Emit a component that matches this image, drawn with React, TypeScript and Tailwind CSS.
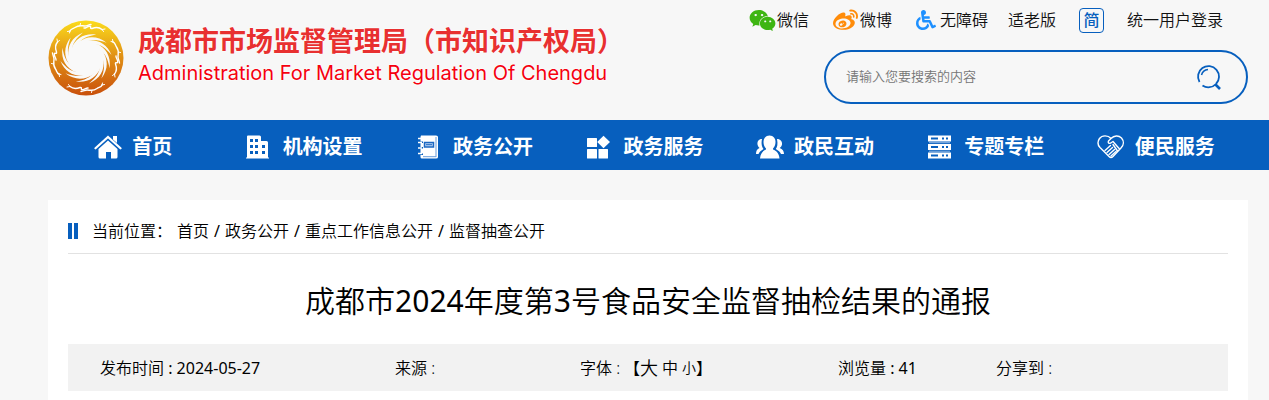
import type { ReactNode } from 'react';
import { FaWeibo, FaWeixin, FaWheelchair } from 'react-icons/fa';

const blades = Array.from({ length: 12 }, (_, i) => i * 30);
const quarters = [0, 90, 180, 270];

function SunBird() {
  return (
    <svg viewBox="0 0 76 76" className="h-[76px] w-[76px] shrink-0" aria-hidden="true">
      <defs>
        <linearGradient id="sun" x1="0" y1="0" x2="0" y2="1">
          <stop offset="0" stopColor="#fbdc1c" />
          <stop offset="0.45" stopColor="#e29416" />
          <stop offset="1" stopColor="#c9500c" />
        </linearGradient>
      </defs>
      <circle cx="38" cy="38" r="37.5" fill="url(#sun)" />
      <circle cx="38" cy="38" r="17.5" fill="#f9f9f9" />
      {blades.map((a) => (
        <path
          key={a}
          d="M20.500 37C19 26 24 17 35 12.500C28 18.500 24.500 23 24 30Z"
          fill="#f9f9f9"
          transform={`rotate(${a} 38 38)`}
        />
      ))}
      {quarters.map((a) => (
        <g key={a} transform={`rotate(${a} 38 38)`} fill="none" stroke="#fff" strokeLinecap="round">
          <path d="M22 11C23 8.500 25 9 27 7.500C31 4.500 34 6 37 6C39 6 40 5 43 4.500" strokeWidth="1.400" />
          <path d="M36 8C38 8.500 39 6 42 6.300C44 6.800 41 9 44 8.500C48 7 51 7 54 9.500" strokeWidth="1.400" />
          <path d="M22 11L19.500 11.500M22 11L21.500 13M54 9.500L57 9M54 9.500L55.500 11.500M32 5.500L32.500 3.500" strokeWidth="1" />
        </g>
      ))}
    </svg>
  );
}

function Icon({ children }: { children: ReactNode }) {
  return (
    <svg viewBox="0 0 28 24" className="h-6 w-7 shrink-0" fill="currentColor" aria-hidden="true">
      {children}
    </svg>
  );
}

const navItems = [
  {
    name: '首页',
    icon: (
      <Icon>
        <path d="M1.500 13.300L14 2L26.500 13.300" fill="none" stroke="currentColor" strokeWidth="2.200" strokeLinecap="round" />
        <path d="M19 1H23V8L19 4.500Z" />
        <path d="M14 5.500L23.500 14V22Q23.500 23.500 22 23.500H17V17H12V23.500H6Q4.500 23.500 4.500 22V14Z" />
      </Icon>
    ),
  },
  {
    name: '机构设置',
    icon: (
      <Icon>
        <path
          fillRule="evenodd"
          d="M3 0.500H14.500Q16 0.500 16 2V6H21.500Q23 6 23 7.500V22.500H24V23.500H1V22.500H2V1.500Q2 0.500 3 0.500ZM5 4V7H8V4ZM10 4V7H13V4ZM5 10V13H8V10ZM10 10V13H13V10ZM5 16V19H8V16ZM10 16V19H13V16ZM17 10V13H20V10ZM17 16V19H20V16Z"
        />
      </Icon>
    ),
  },
  {
    name: '政务公开',
    icon: (
      <Icon>
        <path
          fillRule="evenodd"
          d="M6 0.500H21Q23 0.500 23 2V22Q23 23.500 21 23.500H7Q5.500 23.500 5.500 22V20H8V18.500H5.500V13.500H8V12H5.500V8H8V6.500H5.500V2Z"
        />
        <path d="M3 3.500H6M3 7.500H7M3 13H7M3 18.500H7" stroke="currentColor" strokeWidth="1.500" />
        <path d="M21 2V22M8 21.700H21" stroke="#6b9dda" />
        <path d="M9.500 7.500H18.500V12H9.500Z" fill="#b8d0ee" stroke="#1c68c2" strokeWidth="1.500" />
        <path d="M11 9.700H17" stroke="#1c68c2" />
      </Icon>
    ),
  },
  {
    name: '政务服务',
    icon: (
      <Icon>
        <rect x="2" y="3" width="10" height="9" rx="0.500" />
        <rect x="2" y="14" width="10" height="9.500" rx="0.500" />
        <rect x="13.500" y="14" width="9.500" height="9.500" rx="0.500" />
        <path d="M18.500 0.700L25 7L18.500 13.300L12.200 7Z" />
      </Icon>
    ),
  },
  {
    name: '政民互动',
    icon: (
      <Icon>
        <path d="M13.500 0.500C17.500 0.500 19.500 3.500 19.500 7C19.500 10 18.500 12 17 13.500V14.500C20.500 16 23 18 23.500 23.500H4C4.500 18 7 16 10 14.500V13.500C8.500 12 7.500 10 7.500 7C7.500 3.500 9.500 0.500 13.500 0.500Z" />
        <path d="M6 4C2.500 4 1 6.500 1.500 9.500C1.800 11 2.500 12 3.500 13C1 14 0 16 0 19H2.500C3.500 17 5 15.500 7.500 14C6 12 5 9 6 4Z" />
        <path d="M21 4C24.500 4 26.500 6.500 26 9.500C25.700 11 25 12 23.700 13C26.500 14 28 16 28 19H25C24 17 22.500 15.500 19.800 14C21.300 12 22 9 21 4Z" />
      </Icon>
    ),
  },
  {
    name: '专题专栏',
    icon: (
      <Icon>
        <path
          fillRule="evenodd"
          d="M2 0.500H25V6.500H2ZM2 9H25V15H2ZM2 17.500H25V23.500H2ZM5 2.500V4.500H12V2.500ZM16 2.500V4.500H18V2.500ZM20 2.500V4.500H22V2.500ZM5 11V13H12V11ZM16 11V13H18V11ZM20 11V13H22V11ZM5 19.500V21.500H12V19.500ZM16 19.500V21.500H18V19.500ZM20 19.500V21.500H22V19.500Z"
        />
        <path d="M3 7.700H24M3 16.200H24" stroke="#8fb5e3" />
      </Icon>
    ),
  },
  {
    name: '便民服务',
    icon: (
      <Icon>
        <g fill="none" stroke="currentColor" strokeWidth="1.400" strokeLinecap="round" strokeLinejoin="round">
          <path d="M14 3.500C11 0 5 0 2.500 3.500C0.500 6.500 0.700 10 3 12.500L12 21.500Q14 23.500 16 21.500L24 13C27 10 27 6 24.500 3C21.500 0 17 0.500 14 3.500L11.500 6C10.500 8.500 13 9 14.500 7.500L16 6.500L22.500 14" />
          <path d="M8 15.500L13.500 10.500M10 17.500L15.500 12.500M12 19.500L17.500 14.500M14 21L19 16.500M16 9.500L20.500 16" />
        </g>
      </Icon>
    ),
  },
];

const crumbs = ['首页', '政务公开', '重点工作信息公开', '监督抽查公开'];

function Header() {
  return (
    <header className="flex h-[120px] justify-between pr-[21px] pl-12">
      <a href="#" className="flex items-start pt-5">
        <SunBird />
        <div className="ml-[14px] whitespace-nowrap [text-shadow:0_0_2px_#fff,0_0_2px_#fff]">
          <div className="text-[27px] leading-[42px] font-bold text-[#e83030]">成都市市场监督管理局（市知识产权局）</div>
          <div className="font-[Inter,sans-serif] text-[20px] leading-[22px] text-[#f5000f]">
            Administration For Market Regulation Of Chengdu
          </div>
        </div>
      </a>

      <div className="flex flex-col items-end">
        <div className="flex h-10 items-center gap-5 pr-[25px] text-base font-[350] whitespace-nowrap text-[#111]">
          <a href="#" className="flex items-center gap-px">
            <FaWeixin size={27} color="#3eb512" />
            微信
          </a>
          <a href="#" className="flex items-center gap-0.5 pl-1">
            <FaWeibo size={25} color="#ff8c0a" />
            微博
          </a>
          <a href="#" className="flex items-center gap-1 pl-1">
            <FaWheelchair size={20} color="#1e90ff" />
            无障碍
          </a>
          <a href="#">适老版</a>
          <button
            type="button"
            className="mx-[3px] flex h-[25px] w-[25px] items-center justify-center rounded border border-[#075fbe] font-medium text-[#075fbe]"
          >
            简
          </button>
          <a href="#">统一用户登录</a>
        </div>

        <form className="mt-[10px] flex h-[54px] w-[424px] items-center rounded-full border-2 border-[#075fbe] pr-6 pl-5">
          <input
            type="text"
            aria-label="搜索"
            placeholder="请输入您要搜索的内容"
            className="min-w-0 flex-1 bg-transparent text-[13px] font-[350] outline-none placeholder:text-[#757575]"
          />
          <button type="button" aria-label="搜索" className="text-[#075fbe]">
            <svg viewBox="0 0 26 26" className="h-[26px] w-[26px]" fill="none" stroke="currentColor" strokeWidth="1.800">
              <path d="M6.500 21.500A10.500 10.500 0 0 0 20 20M3.500 18A10.500 10.500 0 1 1 20 20" />
              <path d="M5.500 11A7.500 7.500 0 0 1 12 5.500" strokeWidth="1.500" />
              <path d="M19.500 20.500L24 25" strokeWidth="2.600" />
            </svg>
          </button>
        </form>
      </div>
    </header>
  );
}

function Nav() {
  return (
    <nav className="bg-[#075fbe] pr-7 pl-12">
      <ul className="grid h-[50px] grid-cols-7">
        {navItems.map((item) => (
          <li key={item.name}>
            <a
              href="#"
              className="flex h-full items-center justify-center gap-[10px] pt-[3px] text-xl font-bold whitespace-nowrap text-white"
            >
              {item.icon}
              {item.name}
            </a>
          </li>
        ))}
      </ul>
    </nav>
  );
}

export default function App() {
  return (
    <div className="min-h-screen bg-[#f7f7f7] font-['Noto_Sans','Noto_Sans_CJK_SC',sans-serif] text-black">
      <Header />
      <Nav />

      <main className="mt-[30px] mr-[21px] ml-12 bg-white px-5 pb-[9px] font-[350]">
        <div className="flex h-[54px] items-center border-b border-[#e2e2e2] pt-2">
          <span className="mr-[14px] h-4 w-[10px] border-x-4 border-[#075fbe]" />
          <span className="mr-[5px]">当前位置：</span>
          {crumbs.map((name, i) => (
            <span key={name}>
              {i > 0 && <span className="mx-[5px] font-normal">/</span>}
              <a href="#">{name}</a>
            </span>
          ))}
        </div>

        <h1 className="pt-6 pb-5 text-center text-[30px] leading-[46px] font-[350]">
          成都市<span className="font-normal">2024</span>年度第<span className="font-normal">3</span>
          号食品安全监督抽检结果的通报
        </h1>

        <div className="grid h-[47px] grid-cols-[295fr_185fr_258fr_158fr_232fr] items-center bg-[#f2f2f2] pl-8 whitespace-nowrap">
          <span>
            发布时间 <span className="font-normal">: 2024-05-27</span>
          </span>
          <span>来源 :</span>
          <span className="flex items-center">
            字体 :
            <span className="ml-1">【</span>
            <button type="button" className="text-lg">大</button>
            <button type="button" className="ml-1">中</button>
            <button type="button" className="ml-1 text-sm">小</button>
            <span>】</span>
          </span>
          <span>
            浏览量 <span className="font-normal">: 41</span>
          </span>
          <span>分享到 :</span>
        </div>
      </main>
    </div>
  );
}
